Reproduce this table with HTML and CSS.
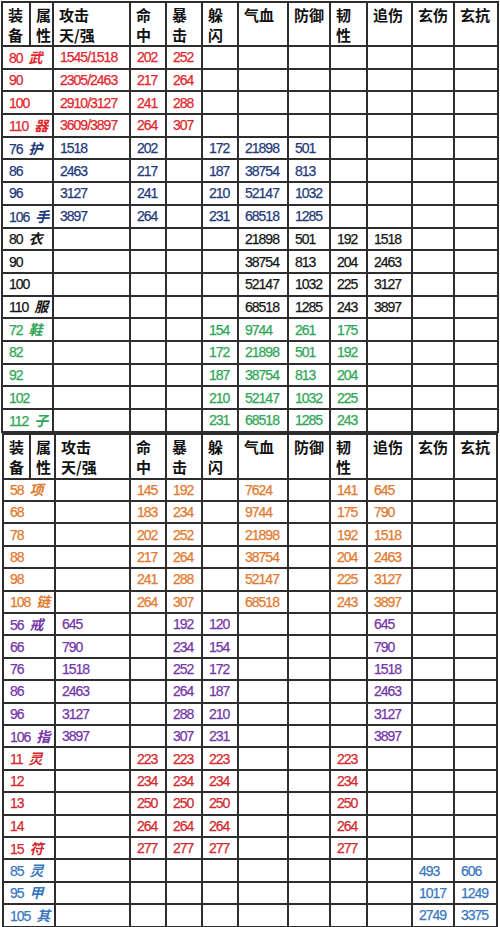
FILE: index.html
```html
<!DOCTYPE html>
<html lang="zh">
<head>
<meta charset="utf-8">
<link rel="stylesheet" href="styles.css">
</head>
<body>
<table class="grid grid-top">
  <colgroup>
    <col class="c1"><col class="c2"><col class="c3"><col class="c4"><col class="c5"><col class="c6">
    <col class="c7"><col class="c8"><col class="c9"><col class="c10"><col class="c11"><col class="c12">
  </colgroup>
  <tr class="head">
    <th>装<br>备</th><th>属<br>性</th><th>攻击<br>天/强</th><th>命<br>中</th><th>暴<br>击</th><th>躲<br>闪</th>
    <th>气血</th><th>防御</th><th>韧<br>性</th><th>追伤</th><th>玄伤</th><th>玄抗</th>
  </tr>
  <tr class="row red"><td colspan="2">80 <span class="tag">武</span></td><td>1545/1518</td><td>202</td><td>252</td><td></td><td></td><td></td><td></td><td></td><td></td><td></td></tr>
  <tr class="row red"><td colspan="2">90</td><td>2305/2463</td><td>217</td><td>264</td><td></td><td></td><td></td><td></td><td></td><td></td><td></td></tr>
  <tr class="row red"><td colspan="2">100</td><td>2910/3127</td><td>241</td><td>288</td><td></td><td></td><td></td><td></td><td></td><td></td><td></td></tr>
  <tr class="row red"><td colspan="2">110 <span class="tag">器</span></td><td>3609/3897</td><td>264</td><td>307</td><td></td><td></td><td></td><td></td><td></td><td></td><td></td></tr>
  <tr class="row navy"><td colspan="2">76 <span class="tag">护</span></td><td>1518</td><td>202</td><td></td><td>172</td><td>21898</td><td>501</td><td></td><td></td><td></td><td></td></tr>
  <tr class="row navy"><td colspan="2">86</td><td>2463</td><td>217</td><td></td><td>187</td><td>38754</td><td>813</td><td></td><td></td><td></td><td></td></tr>
  <tr class="row navy"><td colspan="2">96</td><td>3127</td><td>241</td><td></td><td>210</td><td>52147</td><td>1032</td><td></td><td></td><td></td><td></td></tr>
  <tr class="row navy"><td colspan="2">106 <span class="tag">手</span></td><td>3897</td><td>264</td><td></td><td>231</td><td>68518</td><td>1285</td><td></td><td></td><td></td><td></td></tr>
  <tr class="row black"><td colspan="2">80 <span class="tag">衣</span></td><td></td><td></td><td></td><td></td><td>21898</td><td>501</td><td>192</td><td>1518</td><td></td><td></td></tr>
  <tr class="row black"><td colspan="2">90</td><td></td><td></td><td></td><td></td><td>38754</td><td>813</td><td>204</td><td>2463</td><td></td><td></td></tr>
  <tr class="row black"><td colspan="2">100</td><td></td><td></td><td></td><td></td><td>52147</td><td>1032</td><td>225</td><td>3127</td><td></td><td></td></tr>
  <tr class="row black"><td colspan="2">110 <span class="tag">服</span></td><td></td><td></td><td></td><td></td><td>68518</td><td>1285</td><td>243</td><td>3897</td><td></td><td></td></tr>
  <tr class="row green"><td colspan="2">72 <span class="tag">鞋</span></td><td></td><td></td><td></td><td>154</td><td>9744</td><td>261</td><td>175</td><td></td><td></td><td></td></tr>
  <tr class="row green"><td colspan="2">82</td><td></td><td></td><td></td><td>172</td><td>21898</td><td>501</td><td>192</td><td></td><td></td><td></td></tr>
  <tr class="row green"><td colspan="2">92</td><td></td><td></td><td></td><td>187</td><td>38754</td><td>813</td><td>204</td><td></td><td></td><td></td></tr>
  <tr class="row green"><td colspan="2">102</td><td></td><td></td><td></td><td>210</td><td>52147</td><td>1032</td><td>225</td><td></td><td></td><td></td></tr>
  <tr class="row green"><td colspan="2">112 <span class="tag">子</span></td><td></td><td></td><td></td><td>231</td><td>68518</td><td>1285</td><td>243</td><td></td><td></td><td></td></tr>
</table>
<table class="grid grid-bottom">
  <colgroup>
    <col class="d1"><col class="d2"><col class="d3"><col class="c4"><col class="c5"><col class="c6">
    <col class="c7"><col class="c8"><col class="c9"><col class="c10"><col class="c11"><col class="d12">
  </colgroup>
  <tr class="head">
    <th>装<br>备</th><th>属<br>性</th><th>攻击<br>天/强</th><th>命<br>中</th><th>暴<br>击</th><th>躲<br>闪</th>
    <th>气血</th><th>防御</th><th>韧<br>性</th><th>追伤</th><th>玄伤</th><th>玄抗</th>
  </tr>
  <tr class="row orange"><td colspan="2">58 <span class="tag">项</span></td><td></td><td>145</td><td>192</td><td></td><td>7624</td><td></td><td>141</td><td>645</td><td></td><td></td></tr>
  <tr class="row orange"><td colspan="2">68</td><td></td><td>183</td><td>234</td><td></td><td>9744</td><td></td><td>175</td><td>790</td><td></td><td></td></tr>
  <tr class="row orange"><td colspan="2">78</td><td></td><td>202</td><td>252</td><td></td><td>21898</td><td></td><td>192</td><td>1518</td><td></td><td></td></tr>
  <tr class="row orange"><td colspan="2">88</td><td></td><td>217</td><td>264</td><td></td><td>38754</td><td></td><td>204</td><td>2463</td><td></td><td></td></tr>
  <tr class="row orange"><td colspan="2">98</td><td></td><td>241</td><td>288</td><td></td><td>52147</td><td></td><td>225</td><td>3127</td><td></td><td></td></tr>
  <tr class="row orange"><td colspan="2">108 <span class="tag">链</span></td><td></td><td>264</td><td>307</td><td></td><td>68518</td><td></td><td>243</td><td>3897</td><td></td><td></td></tr>
  <tr class="row purple"><td colspan="2">56 <span class="tag">戒</span></td><td>645</td><td></td><td>192</td><td>120</td><td></td><td></td><td></td><td>645</td><td></td><td></td></tr>
  <tr class="row purple"><td colspan="2">66</td><td>790</td><td></td><td>234</td><td>154</td><td></td><td></td><td></td><td>790</td><td></td><td></td></tr>
  <tr class="row purple"><td colspan="2">76</td><td>1518</td><td></td><td>252</td><td>172</td><td></td><td></td><td></td><td>1518</td><td></td><td></td></tr>
  <tr class="row purple"><td colspan="2">86</td><td>2463</td><td></td><td>264</td><td>187</td><td></td><td></td><td></td><td>2463</td><td></td><td></td></tr>
  <tr class="row purple"><td colspan="2">96</td><td>3127</td><td></td><td>288</td><td>210</td><td></td><td></td><td></td><td>3127</td><td></td><td></td></tr>
  <tr class="row purple"><td colspan="2">106 <span class="tag">指</span></td><td>3897</td><td></td><td>307</td><td>231</td><td></td><td></td><td></td><td>3897</td><td></td><td></td></tr>
  <tr class="row crimson"><td colspan="2">11 <span class="tag">灵</span></td><td></td><td>223</td><td>223</td><td>223</td><td></td><td></td><td>223</td><td></td><td></td><td></td></tr>
  <tr class="row crimson"><td colspan="2">12</td><td></td><td>234</td><td>234</td><td>234</td><td></td><td></td><td>234</td><td></td><td></td><td></td></tr>
  <tr class="row crimson"><td colspan="2">13</td><td></td><td>250</td><td>250</td><td>250</td><td></td><td></td><td>250</td><td></td><td></td><td></td></tr>
  <tr class="row crimson"><td colspan="2">14</td><td></td><td>264</td><td>264</td><td>264</td><td></td><td></td><td>264</td><td></td><td></td><td></td></tr>
  <tr class="row crimson"><td colspan="2">15 <span class="tag">符</span></td><td></td><td>277</td><td>277</td><td>277</td><td></td><td></td><td>277</td><td></td><td></td><td></td></tr>
  <tr class="row blue"><td colspan="2">85 <span class="tag">灵</span></td><td></td><td></td><td></td><td></td><td></td><td></td><td></td><td></td><td>493</td><td>606</td></tr>
  <tr class="row blue"><td colspan="2">95 <span class="tag">甲</span></td><td></td><td></td><td></td><td></td><td></td><td></td><td></td><td></td><td>1017</td><td>1249</td></tr>
  <tr class="row blue"><td colspan="2">105 <span class="tag">其</span></td><td></td><td></td><td></td><td></td><td></td><td></td><td></td><td></td><td>2749</td><td>3375</td></tr>
</table>
</body>
</html>
```
FILE: styles.css
```css
html, body {
  margin: 0;
  padding: 0;
  background: #ffffff;
}

body {
  padding: 1px 0 0 1px;
}

.grid {
  border-collapse: collapse;
  table-layout: fixed;
  width: 497px;
}

.grid-bottom {
  margin-left: 1px;
  width: 496px;
}

.c1 { width: 28px; }
.c2 { width: 23px; }
.c3 { width: 77px; }
.c4 { width: 36px; }
.c5 { width: 36px; }
.c6 { width: 36px; }
.c7 { width: 50px; }
.c8 { width: 42px; }
.c9 { width: 37px; }
.c10 { width: 45px; }
.c11 { width: 42px; }
.c12 { width: 44px; }

.d1 { width: 27px; }
.d2 { width: 25px; }
.d3 { width: 75px; }
.d12 { width: 43px; }

.grid th,
.grid td {
  border: 2px solid #2d2d2d;
  text-align: left;
  white-space: nowrap;
  overflow: hidden;
}

.grid th {
  vertical-align: top;
  padding: 2px 0 0 5px;
  font: bold 15px/20px "Noto Sans CJK SC", sans-serif;
  color: #111111;
}

.grid-top .head { height: 44px; }
.grid-bottom .head { height: 45px; }

.grid td {
  vertical-align: middle;
  padding: 0 0 0 6px;
  font: 14px/16px "Liberation Sans", sans-serif;
  letter-spacing: -1px;
  -webkit-text-stroke: 0.25px currentColor;
}

.grid-top .row { height: 22.7px; }
.grid-bottom .row { height: 22.4px; }

.tag {
  font: bold italic 14px/16px "Noto Sans CJK SC", sans-serif;
  letter-spacing: 0;
  -webkit-text-stroke: 0;
  margin-left: 3px;
}

.red { color: #e2262c; }
.navy { color: #1f3a7a; }
.black { color: #141414; }
.green { color: #2ea656; }
.orange { color: #e2792e; }
.purple { color: #7536a8; }
.crimson { color: #d4282e; }
.blue { color: #3a78be; }
```
